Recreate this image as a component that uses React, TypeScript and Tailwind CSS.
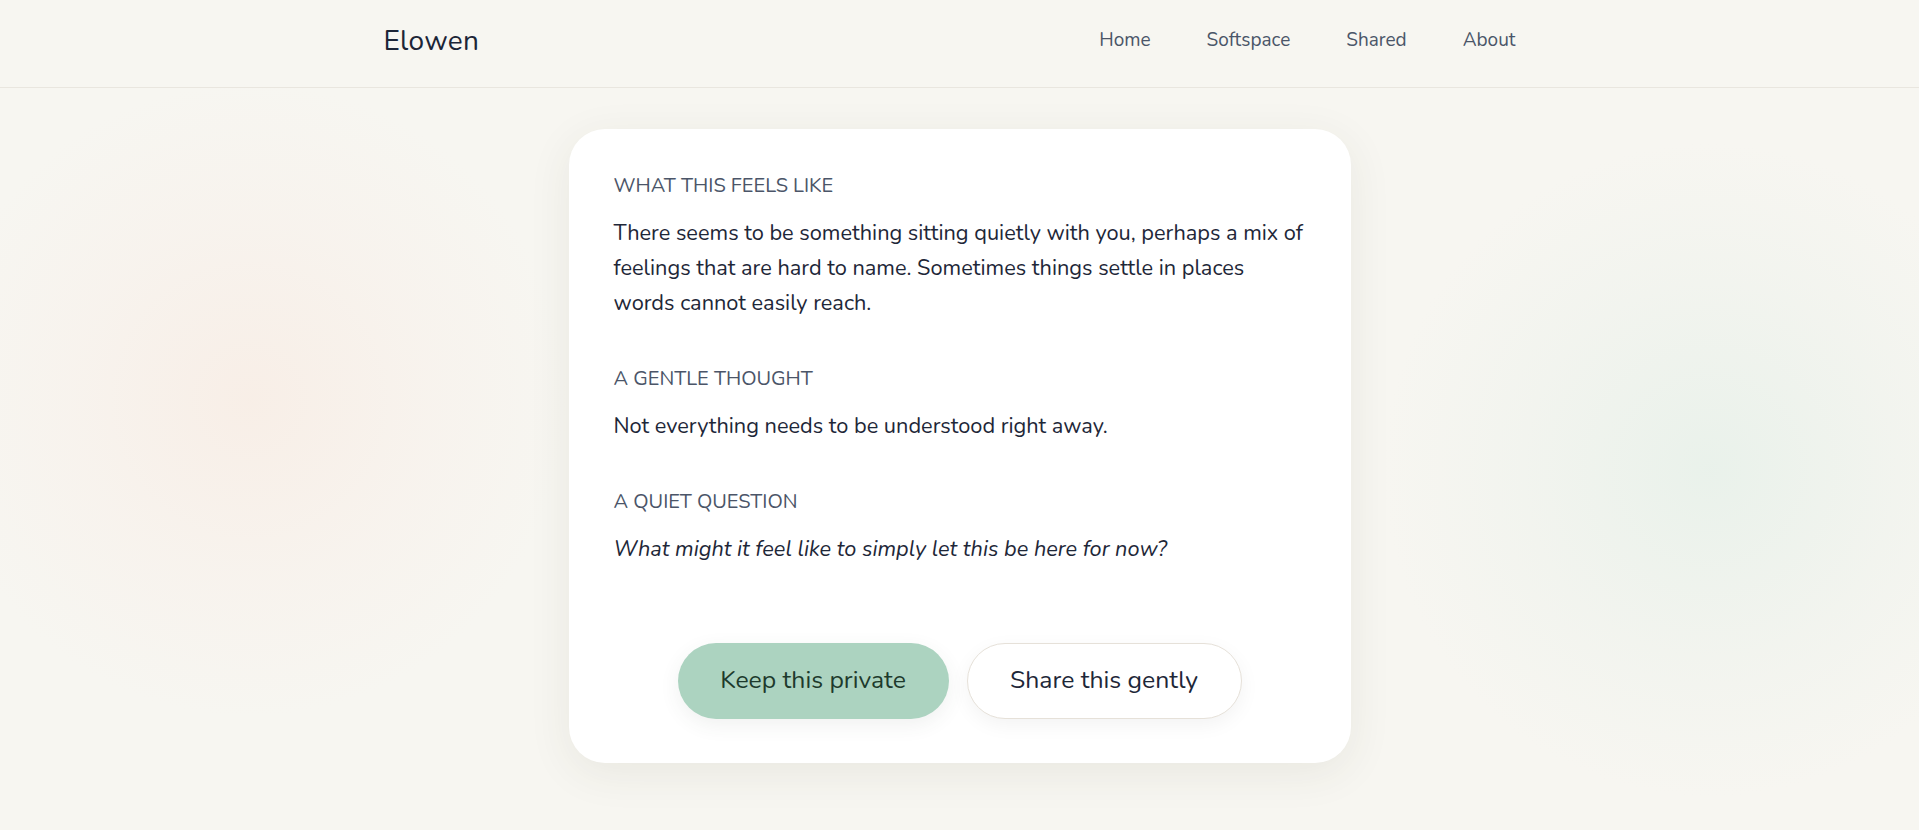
import React from "react";

const font = { fontFamily: "Nunito, Lato, 'Noto Sans', sans-serif" };

export default function App() {
  return (
    <div
      className="relative min-h-screen overflow-hidden bg-[#f7f6f1] font-['Lato','Noto_Sans',sans-serif]"
      style={font}
    >
      {/* soft background glows */}
      <div className="pointer-events-none absolute left-[-70px] top-[80px] h-[640px] w-[640px] rounded-full bg-[radial-gradient(circle,rgba(248,237,229,0.85)_0%,rgba(248,240,234,0.5)_40%,rgba(247,246,241,0)_70%)]" />
      <div className="pointer-events-none absolute left-[1380px] top-[140px] h-[660px] w-[660px] rounded-full bg-[radial-gradient(circle,rgba(232,241,234,0.9)_0%,rgba(237,242,236,0.5)_40%,rgba(247,246,241,0)_70%)]" />

      <header className="relative h-[88px] border-b border-[#e9e6df]">
        <div className="mx-auto flex h-[87px] max-w-6xl items-center justify-between pb-[6px]">
          <div className="text-[28px] tracking-[0.01em] text-[#1c2537]">Elowen</div>
          <nav className="flex items-center gap-4 text-[19px] text-[#4a5568]">
            <a className="px-5">Home</a>
            <a className="px-5">Softspace</a>
            <a className="px-5">Shared</a>
            <a className="px-5">About</a>
          </nav>
        </div>
      </header>

      <main className="relative flex justify-center pt-[41px]">
        <div className="w-[782px] rounded-[36px] bg-white px-[45px] pb-[44px] pt-[43px] shadow-[0_10px_44px_rgba(70,60,40,0.08)]">
          <section>
            <div className="mb-[17px] text-[20px] leading-[27px] text-[#4b5568]">
              WHAT THIS FEELS LIKE
            </div>
            <p className="text-[21.75px] leading-[35px] text-[#1e2738]">
              There seems to be something sitting quietly with you, perhaps a mix of feelings that
              are hard to name. Sometimes things settle in places words cannot easily reach.
            </p>
          </section>

          <section className="mt-[44px]">
            <div className="mb-[17px] text-[20px] leading-[27px] text-[#4b5568]">
              A GENTLE THOUGHT
            </div>
            <p className="text-[21.75px] leading-[35px] text-[#1e2738]">
              Not everything needs to be understood right away.
            </p>
          </section>

          <section className="mt-[44px]">
            <div className="mb-[17px] text-[20px] leading-[27px] text-[#4b5568]">
              A QUIET QUESTION
            </div>
            <p className="text-[21.75px] italic leading-[35px] text-[#1e2738]">
              What might it feel like to simply let this be here for now?
            </p>
          </section>

          <div className="mt-[76px] flex justify-center gap-[18px]">
            <button className="flex h-[76px] w-[271px] items-center justify-center rounded-full bg-[#acd3c0] text-[24.75px] text-[#1d3a2c] shadow-[0_6px_20px_rgba(60,80,70,0.08)]">
              Keep this private
            </button>
            <button className="flex h-[76px] w-[275px] items-center justify-center rounded-full border border-[#e6e1d9] bg-white text-[24.75px] text-[#1e2738] shadow-[0_6px_20px_rgba(0,0,0,0.05)]">
              Share this gently
            </button>
          </div>
        </div>
      </main>
    </div>
  );
}
